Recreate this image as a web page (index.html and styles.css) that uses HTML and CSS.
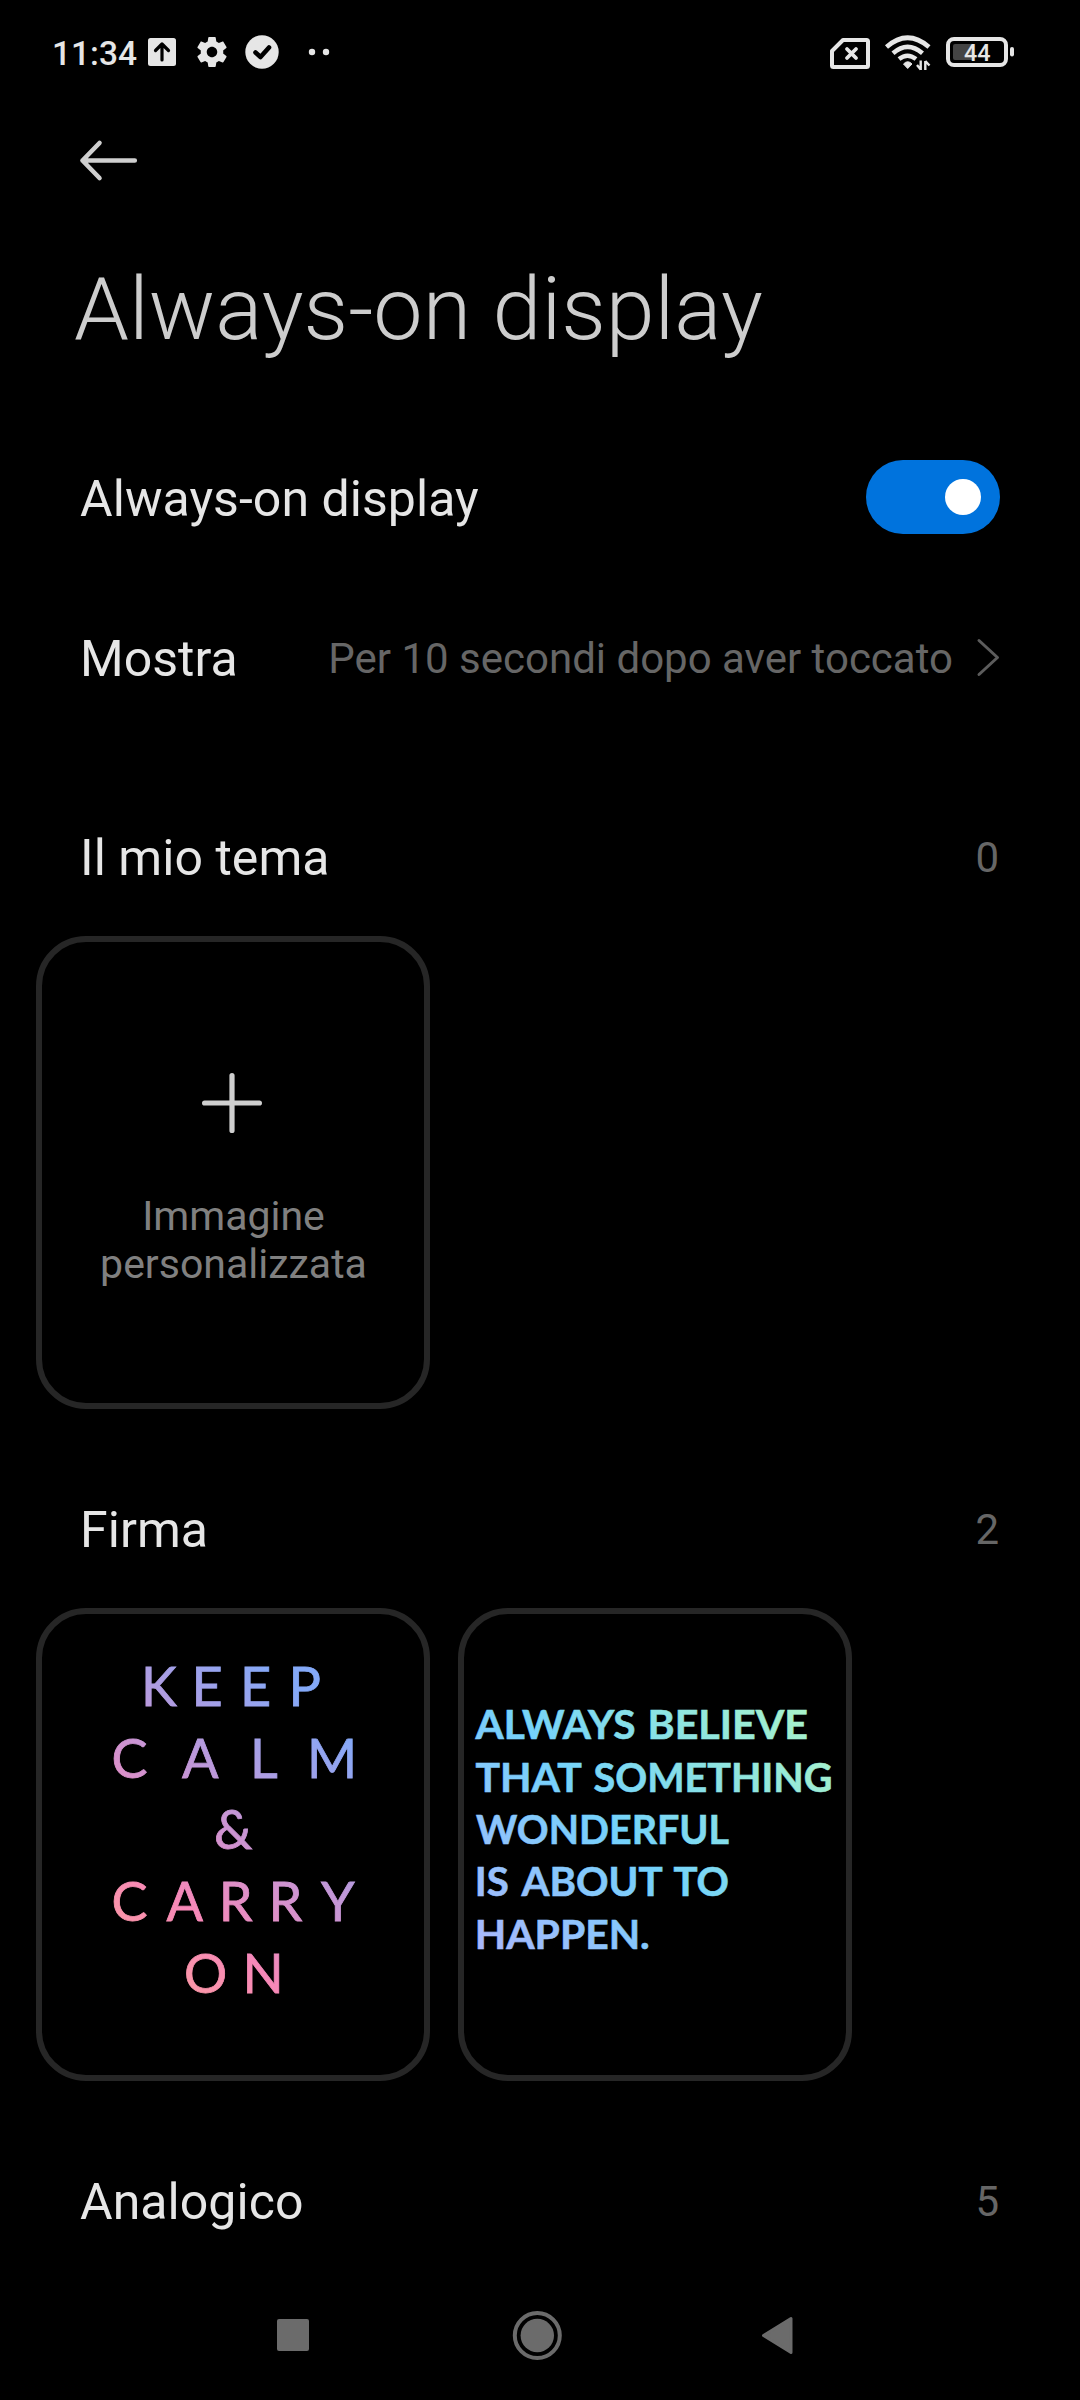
FILE: index.html
```html
<!DOCTYPE html>
<html lang="it">
<head>
<meta charset="utf-8">
<title>Always-on display</title>
<link rel="stylesheet" href="styles.css">
</head>
<body>
<div class="screen">
  <header class="status">
    <span class="clock">11:34</span>
    <svg class="status-left" width="190" height="40" viewBox="144 32 190 40">
      <rect x="148" y="38" width="28" height="28" rx="2.5" fill="#e6e6e6"/>
      <path d="M162 60V45M155.5 50.5L162 44L168.500 50.500" fill="none" stroke="#000" stroke-width="3.200" stroke-linecap="round" stroke-linejoin="round"/>
      <g transform="translate(194 34) scale(1.5)"><path fill="#e6e6e6" d="M19.43 12.98c.04-.32.07-.64.07-.98s-.03-.66-.07-.98l2.110-1.650c.19-.15.24-.42.12-.64l-2-3.460c-.12-.22-.39-.3-.61-.22l-2.490 1c-.52-.4-1.080-.73-1.690-.98l-.38-2.650A.488.488 0 0 0 14 2h-4c-.25 0-.46.18-.49.42l-.38 2.650c-.61.25-1.170.59-1.690.98l-2.490-1c-.23-.09-.49 0-.61.22l-2 3.460c-.13.22-.07.49.12.64l2.110 1.650c-.04.32-.07.65-.07.98s.03.66.07.98l-2.110 1.650c-.19.15-.24.42-.12.64l2 3.460c.12.22.39.3.61.22l2.490-1c.52.4 1.080.73 1.690.98l.38 2.650c.03.24.24.42.49.42h4c.25 0 .46-.18.49-.42l.38-2.650c.61-.25 1.170-.59 1.690-.98l2.490 1c.23.09.49 0 .61-.22l2-3.460c.12-.22.07-.49-.12-.64l-2.110-1.650zM12 15.500c-1.930 0-3.500-1.570-3.500-3.500s1.570-3.500 3.500-3.500 3.500 1.570 3.500 3.500-1.570 3.500-3.500 3.500z"/></g>
      <circle cx="262" cy="52" r="16.700" fill="#e6e6e6"/>
      <path d="M255.500 52.500L260.500 57L269 47.500" fill="none" stroke="#000" stroke-width="4.600" stroke-linecap="round" stroke-linejoin="round"/>
      <circle cx="312" cy="52" r="3.200" fill="#e6e6e6"/>
      <circle cx="326" cy="52" r="3.200" fill="#e6e6e6"/>
    </svg>
    <svg class="status-right" width="190" height="40" viewBox="826 32 190 40" fill="none" stroke="#e6e6e6">
      <path d="M843 40H866.500Q868 40 868 41.500V65.500Q868 67 866.500 67H833.500Q832 67 832 65.500V51Z" stroke-width="4" stroke-linejoin="round"/>
      <path d="M847 49L856 58M856 49L847 58" stroke-width="3.800" stroke-linecap="round"/>
      <path d="M886.500 47Q907.500 28.500 929 47" stroke-width="4.600"/>
      <path d="M893 53.200Q907.500 40.500 922.500 53.200" stroke-width="4.600"/>
      <path d="M899 59Q907.500 52.500 916 59" stroke-width="4.600"/>
      <path d="M903.500 64Q907.700 59.500 912 64L907.700 68.500Z" fill="#e6e6e6" stroke-width="1"/>
      <path d="M920.700 60.500V70M917 65L920.700 69.500M925.300 70V61M929.500 65.500L925.300 61" stroke-width="2.400"/>
      <rect x="948" y="39" width="58" height="26" rx="6" stroke-width="4"/>
      <path d="M953 46Q953 44 955 44H973V60H955Q953 60 953 58Z" fill="#444" stroke="none"/>
      <rect x="1010" y="47" width="4" height="9.500" rx="2" fill="#e6e6e6" stroke="none"/>
      <text class="battery" x="964" y="61" textLength="26.500" lengthAdjust="spacingAndGlyphs">44</text>
    </svg>
  </header>

  <nav class="toolbar">
    <svg width="60" height="44" viewBox="79 139 60 44" fill="none" stroke="#cfcfcf" stroke-width="4.600" stroke-linecap="round" stroke-linejoin="round"><path d="M134.800 160.500H82.500M99.500 143L82.500 160.500L99.500 178"/></svg>
  </nav>
  <h1 class="title">Always-on display</h1>

  <main>
    <div class="row row-toggle">
      <span class="label">Always-on display</span>
      <span class="switch"><span class="knob"></span></span>
    </div>
    <div class="row row-show">
      <span class="label">Mostra</span>
      <span class="value">Per 10 secondi dopo aver toccato</span>
      <svg class="chevron" width="26" height="42" viewBox="975 637 26 42" fill="none" stroke="#5c5c5c" stroke-width="3" stroke-linecap="round" stroke-linejoin="round"><path d="M979 640.500L997.500 657.500L979 674.500"/></svg>
    </div>

    <section class="group">
      <div class="head"><span class="label">Il mio tema</span><span class="count">0</span></div>
      <div class="cards">
        <div class="card add">
          <svg width="60" height="60" viewBox="0 0 60 60" stroke="#cfcfcf" stroke-width="5.200" stroke-linecap="round"><path d="M2.600 30H57.400M30 2.600V57.400"/></svg>
          <span class="add-label">Immagine personalizzata</span>
        </div>
      </div>
    </section>

    <section class="group">
      <div class="head"><span class="label">Firma</span><span class="count">2</span></div>
      <div class="cards">
        <div class="card">
          <svg class="art calm" width="382" height="461" viewBox="42 1614 382 461">
            <defs><linearGradient id="calm" gradientUnits="userSpaceOnUse" x1="145" y1="1960" x2="345" y2="1730">
              <stop offset="0" stop-color="#fb98a6"/><stop offset=".22" stop-color="#f788b8"/><stop offset=".5" stop-color="#cd94d2"/><stop offset=".75" stop-color="#a89fe6"/><stop offset="1" stop-color="#84a9f8"/>
            </linearGradient></defs>
            <g fill="url(#calm)" stroke="url(#calm)">
              <text x="141 191.500 240 288.500" y="1706">KEEP</text>
              <text x="111.500 182 250 307" y="1777.700">CALM</text>
              <text x="214" y="1849">&amp;</text>
              <text x="111.500 166.500 218.700 268.400 321" y="1920.800">CARRY</text>
              <text x="184 242.500" y="1992.500">ON</text>
            </g>
          </svg>
        </div>
        <div class="card">
          <svg class="art believe" width="382" height="461" viewBox="464 1614 382 461">
            <defs><linearGradient id="believe" gradientUnits="userSpaceOnUse" x1="466" y1="1930" x2="760" y2="1650">
              <stop offset="0" stop-color="#a9b8fc"/><stop offset=".22" stop-color="#8ec4fc"/><stop offset=".44" stop-color="#74d2fb"/><stop offset=".72" stop-color="#8de4e2"/><stop offset="1" stop-color="#aaf4c8"/>
            </linearGradient></defs>
            <g fill="url(#believe)" stroke="url(#believe)">
              <text y="1739"><tspan x="475.500" textLength="160" lengthAdjust="spacingAndGlyphs">ALWAYS</tspan> <tspan x="647.500" textLength="160.500" lengthAdjust="spacingAndGlyphs">BELIEVE</tspan></text>
              <text y="1792"><tspan x="475.500" textLength="105" lengthAdjust="spacingAndGlyphs">THAT</tspan> <tspan x="593.500" textLength="239" lengthAdjust="spacingAndGlyphs">SOMETHING</tspan></text>
              <text y="1844"><tspan x="476" textLength="253" lengthAdjust="spacingAndGlyphs">WONDERFUL</tspan></text>
              <text y="1895.700"><tspan x="474.800" textLength="34" lengthAdjust="spacingAndGlyphs">IS</tspan> <tspan x="521.500" textLength="140" lengthAdjust="spacingAndGlyphs">ABOUT</tspan> <tspan x="673.500" textLength="55.500" lengthAdjust="spacingAndGlyphs">TO</tspan></text>
              <text y="1948.700"><tspan x="474.800" textLength="175" lengthAdjust="spacingAndGlyphs">HAPPEN.</tspan></text>
            </g>
          </svg>
        </div>
      </div>
    </section>

    <section class="group">
      <div class="head"><span class="label">Analogico</span><span class="count">5</span></div>
    </section>
  </main>

  <footer class="navbar">
    <svg width="32" height="32" viewBox="0 0 32 32"><rect width="32" height="32" rx="2" fill="#6b6b6b"/></svg>
    <svg width="50" height="50" viewBox="0 0 50 50"><circle cx="25.300" cy="25.500" r="22.500" fill="none" stroke="#6b6b6b" stroke-width="4"/><circle cx="25.300" cy="25.500" r="16.700" fill="#6b6b6b"/></svg>
    <svg width="32" height="38" viewBox="0 0 32 38"><path d="M2.500 19.500L30 2.500V36.500Z" fill="#6b6b6b" stroke="#6b6b6b" stroke-width="3" stroke-linejoin="round"/></svg>
  </footer>
</div>
</body>
</html>
```
FILE: styles.css
```css
* { box-sizing: border-box; }
body { margin: 0; background: #000; font-family: Roboto, sans-serif; }
svg { display: block; flex: none; }
.screen { width: 1080px; height: 2400px; overflow: hidden; display: flex; flex-direction: column; background: #000; color: #e6e6e6; }

.status { height: 104px; flex: none; display: flex; align-items: center; padding: 0 64px 0 52px; }
.clock { width: 92px; font-size: 33.5px; line-height: 40px; font-weight: 500; padding-top: 3px; white-space: nowrap; }
.status-right { margin-left: auto; }
.battery { font: 500 23.5px Roboto, sans-serif; fill: #e6e6e6; stroke: none; }

.toolbar { height: 113px; flex: none; display: flex; align-items: center; padding: 0 79px; }
.title { margin: 0; height: 186px; flex: none; padding: 40px 0 0 74px; font-size: 88px; line-height: 104px; font-weight: 300; color: #cdcdcd; white-space: nowrap; }

main { flex: 1; min-height: 0; overflow: hidden; }
.row { display: flex; align-items: center; padding: 0 80px; }
.row-toggle { height: 188px; }
.row-show { height: 134px; padding-right: 79px; padding-bottom: 1px; }
.label { font-size: 50px; line-height: 60px; padding-top: 3px; letter-spacing: .05px; white-space: nowrap; }
.switch { margin-left: auto; width: 134px; height: 74px; border-radius: 37px; background: #0073dd; display: flex; align-items: center; justify-content: flex-end; padding-right: 19px; }
.knob { width: 36px; height: 36px; border-radius: 50%; background: #fff; }
.value { margin-left: auto; margin-right: 22px; padding-top: 3px; font-size: 42px; line-height: 50px; color: #666; white-space: nowrap; }

.group { height: 672px; padding-top: 67px; }
.head { display: flex; justify-content: space-between; align-items: center; height: 130px; margin-bottom: 14px; padding: 0 81px 0 80px; }
.head .label { padding-top: 1px; }
.count { padding-top: 1px; font-size: 42px; line-height: 50px; color: #666; }
.cards { display: flex; gap: 28px; padding: 0 36px; }
.card { width: 394px; height: 473px; border: 6px solid #262626; border-radius: 50px; }
.add { display: flex; flex-direction: column; align-items: center; padding: 131px 2px 0 0; }
.add-label { width: 290px; margin: 59px 0 0 3px; text-align: center; font-size: 41px; line-height: 48px; color: #808080; }
.calm { font: 400 54px Lato, sans-serif; stroke-width: .8px; }
.believe { font: 700 40.5px Lato, sans-serif; stroke-width: .6px; }

.navbar { height: 130px; flex: none; display: flex; align-items: center; padding-left: 277px; }
.navbar svg:nth-child(2) { margin-left: 203px; }
.navbar svg:nth-child(3) { margin-left: 199px; }
```
